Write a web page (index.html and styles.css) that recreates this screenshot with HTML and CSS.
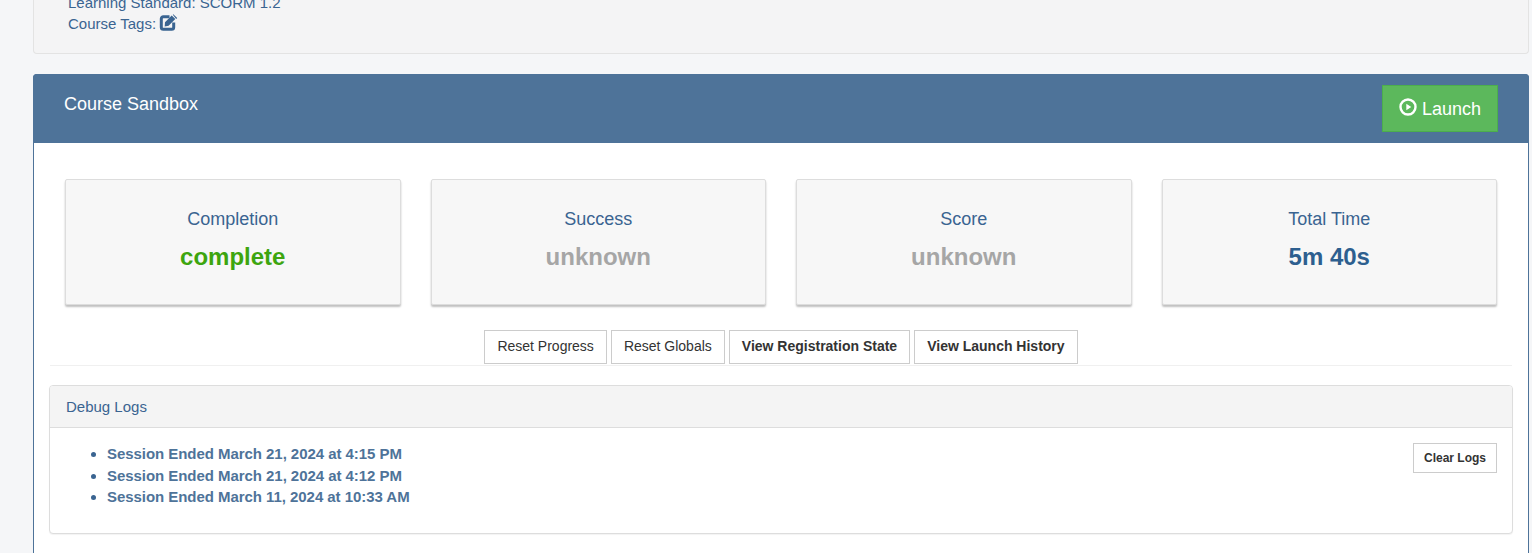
FILE: index.html
```html
<!DOCTYPE html>
<html lang="en">
<head>
<meta charset="utf-8">
<title>Course Sandbox</title>
<link rel="stylesheet" href="styles.css">
</head>
<body>
<main class="page">
  <section class="well">
    <div class="well-line">Learning Standard: SCORM 1.2</div>
    <div class="well-line">Course Tags:
      <svg class="tag-icon" viewBox="0 0 17 15" width="17" height="15" aria-hidden="true">
        <path class="tag-frame" d="M9.500 1.800H3.300a2 2 0 0 0-2 2v8.400a2 2 0 0 0 2 2h8.400a2 2 0 0 0 2-2V7.500"/>
        <path class="tag-pen" d="M5 7.200 11.700.5l3.600 3.600-6.700 6.700-3.900.6ZM12.800-.3l.5-.5 3.900 3.900-1 1Z"/>
      </svg>
    </div>
  </section>

  <section class="panel">
    <header class="panel-head">
      <h2 class="panel-title">Course Sandbox</h2>
      <button class="launch" type="button">
        <svg class="play" viewBox="0 0 18 18" width="18" height="18" aria-hidden="true">
          <circle cx="9" cy="9" r="7.500"/>
          <path d="M7.300 5.800 12.300 9 7.300 12.200Z"/>
        </svg>
        Launch
      </button>
    </header>

    <div class="panel-body">
      <div class="stats">
        <div class="stat-col"><div class="stat"><div class="stat-label">Completion</div><div class="stat-value ok">complete</div></div></div>
        <div class="stat-col"><div class="stat"><div class="stat-label">Success</div><div class="stat-value muted">unknown</div></div></div>
        <div class="stat-col"><div class="stat"><div class="stat-label">Score</div><div class="stat-value muted">unknown</div></div></div>
        <div class="stat-col"><div class="stat"><div class="stat-label">Total Time</div><div class="stat-value time">5m 40s</div></div></div>
      </div>

      <div class="actions">
        <button class="btn" type="button">Reset Progress</button>
        <button class="btn" type="button">Reset Globals</button>
        <button class="btn strong" type="button">View Registration State</button>
        <button class="btn strong" type="button">View Launch History</button>
      </div>

      <section class="logs">
        <h3 class="logs-head">Debug Logs</h3>
        <div class="logs-body">
          <ul class="log-list">
            <li>Session Ended March 21, 2024 at 4:15 PM</li>
            <li>Session Ended March 21, 2024 at 4:12 PM</li>
            <li>Session Ended March 11, 2024 at 10:33 AM</li>
          </ul>
          <button class="btn small" type="button">Clear Logs</button>
        </div>
      </section>
    </div>
  </section>
</main>
</body>
</html>
```
FILE: styles.css
```css
* { box-sizing: border-box; }
html, body { margin: 0; height: 553px; overflow: hidden; }
body {
  background: #f5f6f8;
  font-family: "Liberation Sans", Arial, sans-serif;
  font-size: 15px;
  color: #3a6491;
}
.page { padding: 0 3px 0 33px; }

.well {
  display: flow-root;
  height: 54px;
  padding: 0 34px;
  margin-bottom: 20px;
  background: #f4f4f5;
  border: 1px solid #e3e3e3;
  border-top: 0;
  border-radius: 0 0 4px 4px;
}
.well-line { line-height: 20px; }
.well-line:first-child { margin-top: -7px; margin-bottom: 1px; }
.tag-icon { vertical-align: -1px; overflow: visible; }
.tag-frame { fill: none; stroke: #3a6491; stroke-width: 3; }
.tag-pen { fill: #3a6491; }

.panel {
  border: 1px solid #4e7399;
  border-bottom: 0;
  border-radius: 4px 4px 0 0;
  background: #fff;
  height: 500px;
}
.panel-head {
  height: 69px;
  margin: -1px -1px 0;
  padding: 11px 31px 0 31px;
  background: #4e7399;
  border-radius: 4px 4px 0 0;
  display: flex;
  justify-content: space-between;
  align-items: flex-start;
}
.panel-title {
  margin: 9px 0 0;
  font-size: 18px;
  line-height: 20px;
  font-weight: 400;
  color: #fff;
}
.launch {
  width: 116px;
  height: 47px;
  padding: 0;
  background: #5cb85c;
  border: 1px solid #4cae4c;
  color: #fff;
  font: 18px/1 "Liberation Sans", Arial, sans-serif;
  display: flex;
  align-items: center;
  justify-content: center;
  gap: 5px;
}
.play { display: block; margin-top: -3px; }
.play circle { fill: none; stroke: #fff; stroke-width: 2.400; }
.play path { fill: #fff; }

.panel-body { padding: 36px 16px 0; }
.stats { display: grid; grid-template-columns: repeat(4, 1fr); }
.stat-col { padding: 0 15px; }
.stat {
  height: 126px;
  padding-top: 29px;
  text-align: center;
  background: #f7f7f7;
  border: 1px solid #ddd;
  border-radius: 2px;
  box-shadow: 0 2px 2px rgba(0, 0, 0, .25);
}
.stat-label { font-size: 18px; line-height: 20px; }
.stat-value {
  margin-top: 12px;
  font-size: 24px;
  line-height: 32px;
  font-weight: 700;
}
.ok { color: #3da50f; }
.muted { color: #a6a6a6; }
.time { color: #2d5f8f; }

.actions {
  display: flex;
  justify-content: center;
  gap: 4px;
  margin-top: 25px;
  padding-bottom: 1px;
  border-bottom: 1px solid #f0f0f0;
}
.btn {
  height: 34px;
  padding: 0 12px 2px;
  background: #fff;
  border: 1px solid #ccc;
  color: #333;
  font: 14px/1 "Liberation Sans", Arial, sans-serif;
  white-space: nowrap;
}
.strong { font-weight: 700; }
.small {
  height: 30px;
  padding: 0 10px;
  font-size: 12px;
  font-weight: 700;
  flex: none;
}

.logs {
  margin: 19px -1px 0;
  height: 149px;
  background: #fff;
  border: 1px solid #ddd;
  border-radius: 4px;
  box-shadow: 0 1px 1px rgba(0, 0, 0, .05);
}
.logs-head {
  margin: 0;
  height: 42px;
  padding: 0 16px;
  line-height: 42px;
  font-size: 15px;
  font-weight: 400;
  background: #f4f4f4;
  border-bottom: 1px solid #ddd;
  border-radius: 3px 3px 0 0;
}
.logs-body {
  display: flex;
  justify-content: space-between;
  align-items: flex-start;
  padding: 15px 15px 0 16px;
}
.log-list {
  margin: 0;
  padding: 0 0 0 41px;
  font-weight: 700;
  line-height: 21.500px;
  letter-spacing: -.05px;
  color: #4e7399;
}
.log-list li::marker { color: #3a6491; }
```
